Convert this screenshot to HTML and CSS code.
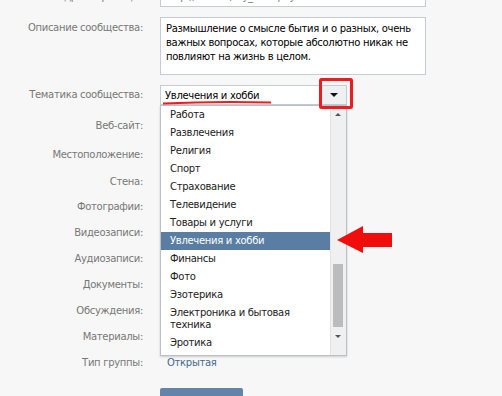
FILE: index.html
```html
<!DOCTYPE html>
<html lang="ru">
  <head>
    <meta charset="UTF-8" />
    <meta name="viewport" content="width=device-width, initial-scale=1.0" />
    <title>Редактирование сообщества</title>
    <link rel="stylesheet" href="styles.css">
  </head>
  <body>
    <div class="form">
      <div class="row row-address">
        <div class="label">Адрес страницы:</div>
        <div class="field">
          <div class="input">http://vk.com/my_filosophya</div>
        </div>
      </div>

      <div class="row row-desc">
        <div class="label">Описание сообщества:</div>
        <div class="field">
          <div class="textarea">Размышление о смысле бытия и о разных, очень важных вопросах, которые абсолютно никак не повлияют на жизнь в целом.</div>
        </div>
      </div>

      <div class="row row-theme">
        <div class="label">Тематика сообщества:</div>
        <div class="field">
          <div class="select">
            <span class="select-value">Увлечения и хобби</span>
            <span class="select-btn"><span class="tri-down"></span></span>

            <!-- open dropdown list -->
            <div class="dropdown">
              <ul class="options">
                <li>Работа</li>
                <li>Развлечения</li>
                <li>Религия</li>
                <li>Спорт</li>
                <li>Страхование</li>
                <li>Телевидение</li>
                <li>Товары и услуги</li>
                <li class="selected">Увлечения и хобби</li>
                <li>Финансы</li>
                <li>Фото</li>
                <li>Эзотерика</li>
                <li>Электроника и бытовая техника</li>
                <li>Эротика</li>
              </ul>
              <div class="scrollbar">
                <span class="sb-up"></span>
                <span class="sb-thumb"></span>
                <span class="sb-down"></span>
              </div>
            </div>
          </div>
        </div>
      </div>

      <div class="row line h28"><div class="label">Веб-сайт:</div><div class="field"></div></div>
      <div class="row line h30"><div class="label">Местоположение:</div><div class="field"></div></div>
      <div class="row line h24"><div class="label">Стена:</div><div class="field"></div></div>
      <div class="row line"><div class="label">Фотографии:</div><div class="field"></div></div>
      <div class="row line"><div class="label">Видеозаписи:</div><div class="field"></div></div>
      <div class="row line"><div class="label">Аудиозаписи:</div><div class="field"></div></div>
      <div class="row line"><div class="label">Документы:</div><div class="field"></div></div>
      <div class="row line"><div class="label">Обсуждения:</div><div class="field"></div></div>
      <div class="row line"><div class="label">Материалы:</div><div class="field"></div></div>
      <div class="row line"><div class="label">Тип группы:</div><div class="field"><a class="link" href="#">Открытая</a></div></div>

      <div class="row row-save">
        <div class="label"></div>
        <div class="field"><button class="save">Сохранить</button></div>
      </div>
    </div>

    <!-- red annotations drawn over the screenshot -->
    <svg class="marks" width="502" height="396" viewBox="0 0 502 396">
      <path d="M163 103.5 Q215 101 271 102.5" fill="none" stroke="#ee1c1c" stroke-width="2" />
      <rect x="320.5" y="79.5" width="31" height="28" rx="1" fill="none" stroke="#ee1c1c" stroke-width="3" />
      <polygon points="337,240 363,226 363,233 392,233 392,247 363,247 363,253" fill="#f20d0d" />
    </svg>
  </body>
</html>
```

FILE: styles.css
```css
body {
  margin: 0;
  height: 396px;
  overflow: hidden;
  background: #f7f7f7;
  font-family: "DejaVu Sans", Verdana, sans-serif;
  font-size: 10px;
  letter-spacing: -0.3px;
  color: #000;
  position: relative;
}

.form {
  margin-top: -14px;
  width: 426px;
}

.row {
  display: flex;
  gap: 17px;
}

.label {
  width: 143px;
  flex: none;
  text-align: right;
  color: #777;
  line-height: 14px;
}

.field {
  flex: 1;
  min-width: 0;
}

.row-address {
  align-items: center;
  margin-bottom: 10px;
}

.input {
  height: 19px;
  line-height: 19px;
  padding: 0 6px;
  border: 1px solid #c6ccd3;
  background: #fff;
  color: #777;
}

.row-desc {
  margin-bottom: 10px;
}

.row-desc .label {
  padding-top: 4px;
}

.textarea {
  height: 50px;
  padding: 4px 5px 2px 5px;
  border: 1px solid #c6ccd3;
  background: #fff;
  line-height: 14px;
}

.row-theme {
  align-items: center;
  margin-bottom: 7px;
}

.select {
  position: relative;
  width: 185px;
  height: 18px;
  border: 1px solid #c6ccd3;
  background: #fff;
  display: flex;
  align-items: center;
}

.select-value {
  flex: 1;
  padding-left: 4px;
}

.select-btn {
  width: 24px;
  height: 18px;
  background: #eef0f2;
  display: flex;
  align-items: center;
  justify-content: center;
}

.tri-down {
  width: 0;
  height: 0;
  border-left: 4px solid transparent;
  border-right: 4px solid transparent;
  border-top: 4px solid #111;
}

.dropdown {
  position: absolute;
  top: 19px;
  left: -1px;
  width: 185px;
  border: 1px solid #b9c0c8;
  background: #fff;
  box-shadow: 0 1px 2px rgba(0, 0, 0, 0.18);
  display: flex;
  z-index: 2;
}

.options {
  list-style: none;
  margin: 0;
  padding: 0 0 3px 0;
  width: 169px;
}

.options li {
  padding: 3px 25px 3px 9px;
  line-height: 12px;
  color: #222;
}

.options li.selected {
  background: #597da3;
  color: #fff;
}

.scrollbar {
  width: 15px;
  border-left: 1px solid #e2e2e2;
  background: #f0f0f0;
  position: relative;
}

.sb-up,
.sb-down {
  position: absolute;
  left: 4px;
  width: 0;
  height: 0;
  border-left: 3px solid transparent;
  border-right: 3px solid transparent;
}

.sb-up {
  top: 7px;
  border-bottom: 3px solid #555;
}

.sb-down {
  bottom: 17px;
  border-top: 3px solid #555;
}

.sb-thumb {
  position: absolute;
  left: 2px;
  top: 158px;
  width: 10px;
  height: 63px;
  background: #bcbcbc;
}

.line {
  height: 26px;
}

.line .label {
  line-height: 26px;
}

.h28 { height: 28px; }
.h28 .label { line-height: 28px; }
.h30 { height: 30px; }
.h30 .label { line-height: 30px; }
.h24 { height: 24px; }
.h24 .label { line-height: 24px; }

.link {
  display: block;
  line-height: 26px;
  padding-left: 7px;
  color: #45688e;
  text-decoration: none;
}

.row-save {
  margin-top: 12px;
}

.save {
  width: 83px;
  height: 32px;
  border: none;
  border-radius: 2px;
  background: #6383a8;
  color: #fff;
  font-family: inherit;
  font-size: 10px;
  padding: 0;
}

.marks {
  position: absolute;
  top: 0;
  left: 0;
  pointer-events: none;
  z-index: 5;
}
```
